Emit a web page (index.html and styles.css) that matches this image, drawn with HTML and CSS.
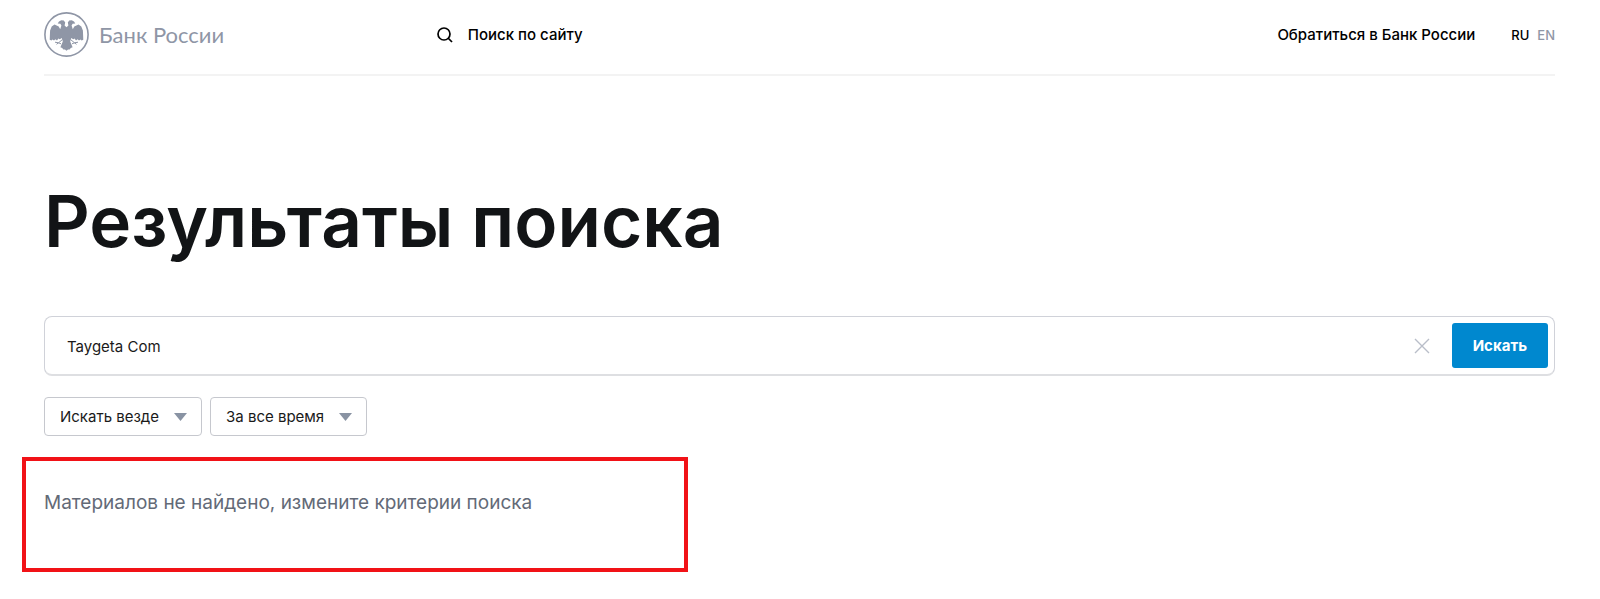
FILE: index.html
```html
<!DOCTYPE html>
<html lang="ru">
<head>
<meta charset="utf-8">
<meta name="viewport" content="width=device-width, initial-scale=1">
<title>Результаты поиска | Банк России</title>
<link rel="stylesheet" href="styles.css">
</head>
<body>
<div class="page">
  <header class="header">
    <a class="logo" href="#">
      <svg class="logo-mark" viewBox="0 0 45 45" aria-hidden="true">
        <circle cx="22.500" cy="22.500" r="21.600" fill="none" stroke="#8f96a6" stroke-width="1.600"/>
        <path fill="#8f96a6" d="M13.700 11.600 15 9.400 17.300 8.300 19.800 8.500 21.200 10.400 20.600 13.600 22.500 15.200 24.400 13.600 23.800 10.400 25.200 8.500 27.700 8.300 30 9.400 31.300 11.600 28.600 11.700 27.600 13.500 28.800 17.200 30.300 14.500 34.500 12.600 37.300 14.500 38.900 18.500 39.300 27.800 37.600 28.600 36.400 27.600 35 28.600 33.600 27.200 32 28.400 30.600 26.600 29.200 27.200 27.200 26 26.200 29.500 28.600 35.200 26.800 36 25.600 37.600 24 37.400 22.500 38.800 21 37.400 19.400 37.600 18.200 36 16.400 35.200 18.800 29.500 17.800 26 15.800 27.200 14.400 26.600 13 28.400 11.400 27.200 10 28.600 8.600 27.600 7.400 28.600 5.700 27.800 6.100 18.500 7.700 14.500 10.500 12.600 14.700 14.500 16.200 17.200 17.400 13.500 16.400 11.700z"/>
        <path fill="none" stroke="#8f96a6" stroke-width="1" d="M18.500 27.500l-4 3.300-3.500-.6M14.500 30.800l-2 1.500M14.500 30.800l2.500 1M26.500 27.500l4 3.300 3.500-.6M30.500 30.800l2 1.500M30.500 30.800l-2.500 1"/>
      </svg>
      <span class="logo-name">Банк России</span>
    </a>
    <a class="site-search" href="#">
      <svg class="search-icon" viewBox="0 0 16 16" aria-hidden="true"><circle cx="7" cy="7" r="6" fill="none" stroke="#000" stroke-width="1.700"/><path d="M11 11l4 4" stroke="#000" stroke-width="1.700" fill="none"/></svg>
      Поиск по сайту
    </a>
    <a class="contact" href="#">Обратиться в Банк России</a>
    <nav class="langs" aria-label="Язык">
      <a class="lang lang-current" href="#">RU</a>
      <a class="lang" href="#">EN</a>
    </nav>
  </header>
  <main>
    <h1 class="title">Результаты поиска</h1>
    <form class="search-form">
      <div class="search-box">
        <input class="query" type="text" value="Taygeta Com" aria-label="Поисковый запрос">
        <button class="clear" type="button" aria-label="Очистить">
          <svg viewBox="0 0 16 16" width="16" height="16" aria-hidden="true"><path d="M1 1l14 14M15 1L1 15" stroke="#b9bec9" stroke-width="1.400" fill="none"/></svg>
        </button>
        <button class="submit" type="submit">Искать</button>
      </div>
      <div class="filters">
        <div class="filter">
          <select class="filter-select" aria-label="Где искать"><option>Искать везде</option></select>
          <svg class="arrow" viewBox="0 0 13 8" aria-hidden="true"><path d="M0 0h13L6.500 8z" fill="#8993a3"/></svg>
        </div>
        <div class="filter">
          <select class="filter-select" aria-label="Период"><option>За все время</option></select>
          <svg class="arrow" viewBox="0 0 13 8" aria-hidden="true"><path d="M0 0h13L6.500 8z" fill="#8993a3"/></svg>
        </div>
      </div>
    </form>
    <section class="results">
      <p class="empty">Материалов не найдено, измените критерии поиска</p>
    </section>
  </main>
</div>
</body>
</html>
```
FILE: styles.css
```css
* {
  box-sizing: border-box;
}

body {
  margin: 0;
  background: #fff;
  color: #000;
  font-family: Inter, "Liberation Sans", sans-serif;
  font-size: 15px;
}

a {
  color: inherit;
  text-decoration: none;
}

.page {
  padding: 0 45px 0 44px;
}

.header {
  display: flex;
  align-items: center;
  padding: 12px 0 17px;
  border-bottom: 2px solid #f3f3f3;
  font-weight: 500;
}

.logo {
  display: flex;
  flex: 0 0 26%;
  align-items: center;
  gap: 10px;
  color: #8f96a6;
}

.logo-mark {
  width: 45px;
  height: 45px;
}

.logo-name {
  font-family: Lato, "Noto Sans", sans-serif;
  font-size: 22px;
  font-weight: 400;
}

.site-search {
  display: flex;
  flex: 1;
  align-items: center;
  gap: 15px;
}

.search-icon {
  width: 16px;
  height: 16px;
}

.langs {
  display: flex;
  gap: 8px;
  margin-left: 36px;
  font-size: 13px;
}

.lang {
  color: #8f96a6;
}

.lang-current {
  color: #000;
}

.title {
  margin: 101px 0 0;
  color: #121416;
  font-size: 71px;
  font-weight: 600;
  line-height: 88px;
}

.search-form {
  margin-top: 51px;
}

.search-box {
  display: flex;
  align-items: center;
  height: 60px;
  padding: 0 6px 0 22px;
  border: 1px solid #d0d2d9;
  border-bottom: 2px solid #dedfe2;
  border-radius: 8px;
}

.query {
  flex: 1;
  min-width: 0;
  padding: 2px 0 0;
  border: 0;
  outline: 0;
  background: none;
  color: #1a1a1a;
  font: inherit;
}

.clear {
  display: flex;
  margin-right: 22px;
  padding: 0;
  border: 0;
  background: none;
}

.submit {
  height: 45px;
  padding: 0 21px;
  border: 0;
  border-radius: 3px;
  background: #0088cf;
  color: #fff;
  font: inherit;
  font-weight: 700;
}

.filters {
  display: flex;
  gap: 8px;
  margin-top: 21px;
}

.filter {
  position: relative;
}

.filter-select {
  height: 39px;
  padding: 0 41px 0 15px;
  border: 1px solid #c6c8ce;
  border-radius: 4px;
  appearance: none;
  background: #fff;
  color: #1a1a1a;
  font: inherit;
}

.arrow {
  position: absolute;
  top: 16px;
  right: 15px;
  width: 13px;
  height: 8px;
  pointer-events: none;
}

.results {
  max-width: 666px;
  margin: 21px 0 0 -22px;
  padding: 29px 18px 52px;
  border: 4px solid #f11217;
}

.empty {
  margin: 0;
  color: #636a77;
  font-size: 19px;
  line-height: 26px;
}
```
